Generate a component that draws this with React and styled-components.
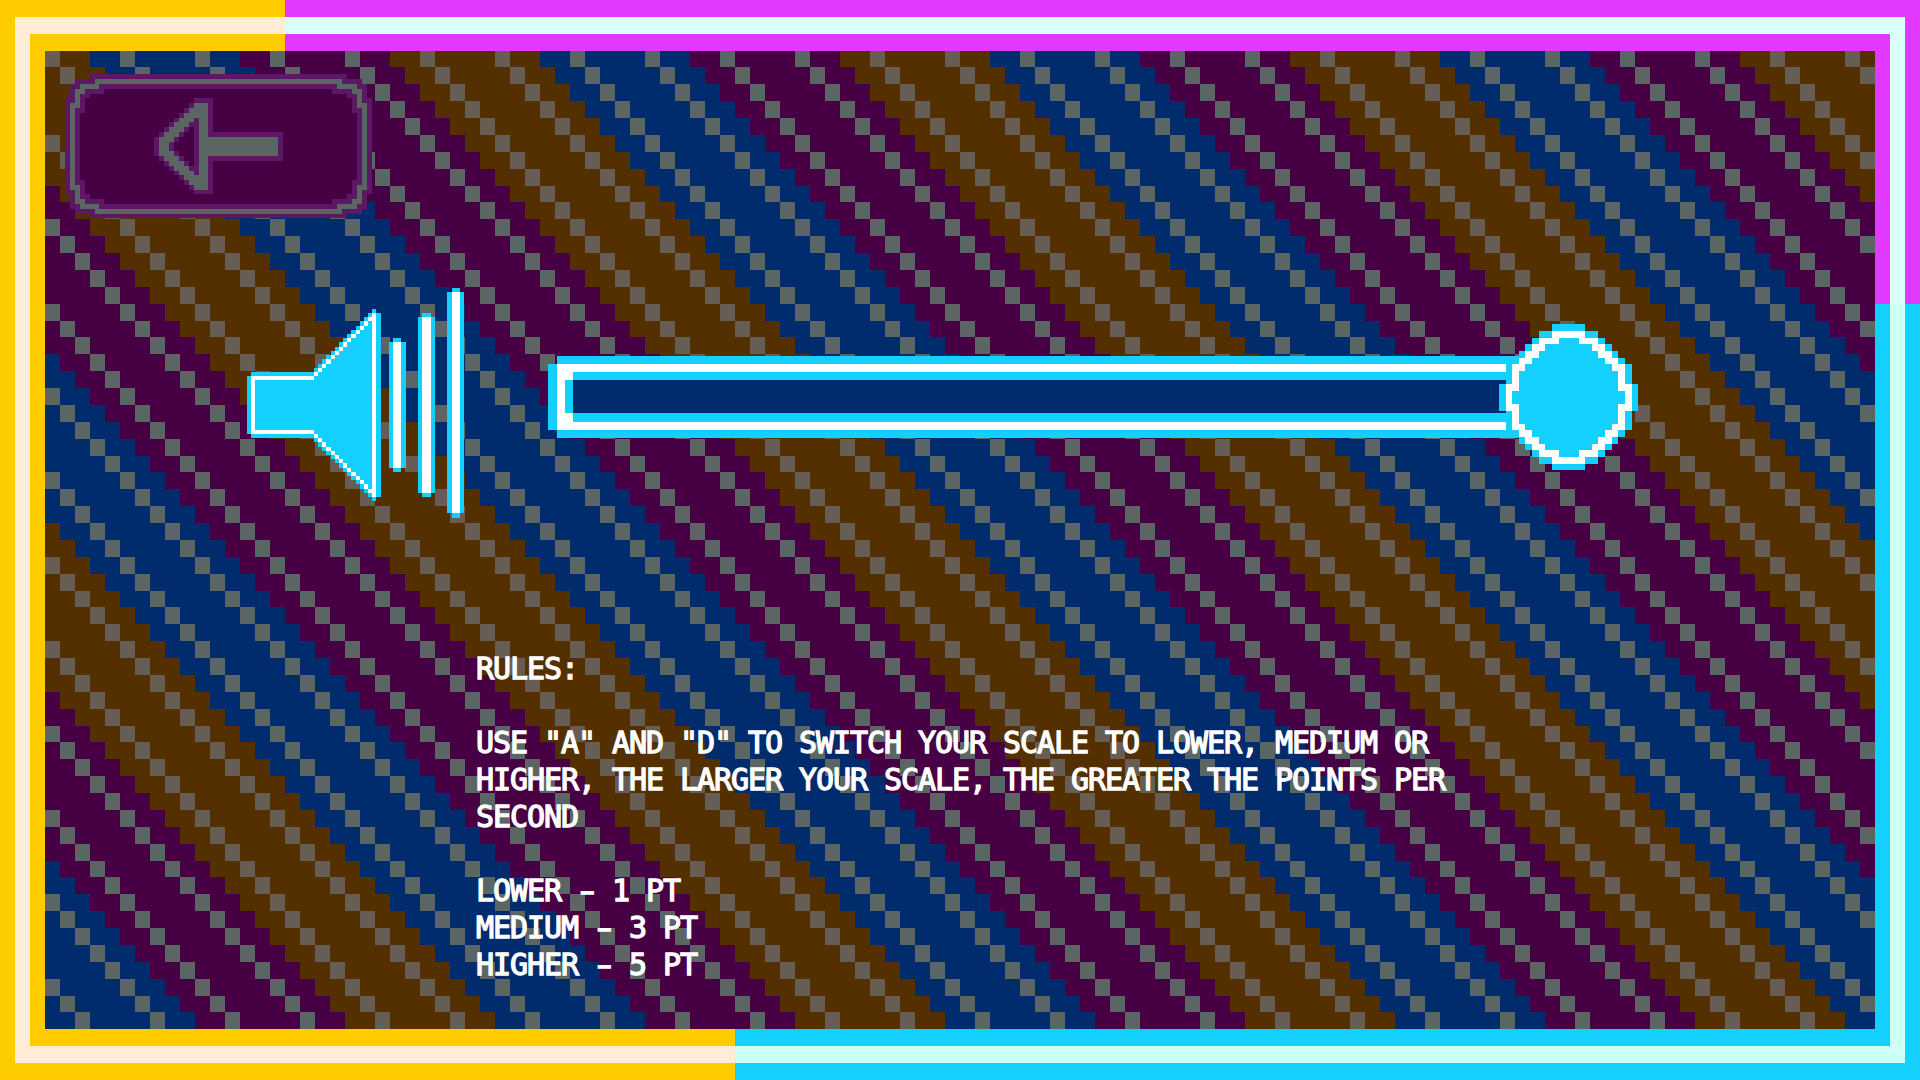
import React from 'react';
import styled, { createGlobalStyle } from 'styled-components';

const color = {
  yellow: '#ffcc00',
  magenta: '#e139ff',
  cyan: '#14d0ff',
  cream: '#ffecd6',
  ice: '#dbffff',
  mint: '#ccfff6',
  navy: '#002c6e',
  plum: '#480044',
  brown: '#543000',
  slate: '#5b6564',
  taupe: '#665e55',
  violet: '#5c1865',
};

const GlobalStyle = createGlobalStyle`
  * { box-sizing: border-box; }
  body { margin: 0; background: #000; overflow: hidden; }
`;

/* Each ring repeats the same three colour regions, shifted by its own inset. */
const Ring = styled.div`
  width: ${(p) => 1920 - p.$step * 30}px;
  height: ${(p) => 1080 - p.$step * 34}px;
  padding: 17px 15px;
  background-color: ${(p) => p.$left};
  background-image: linear-gradient(${(p) => p.$top}, ${(p) => p.$top}),
    linear-gradient(${(p) => p.$right}, ${(p) => p.$right});
  background-repeat: no-repeat;
  background-size: 1920px ${(p) => 304 - p.$step * 17}px, 1920px 1080px;
  background-position: ${(p) => 285 - p.$step * 15}px 0,
    ${(p) => 735 - p.$step * 15}px ${(p) => 304 - p.$step * 17}px;
`;

const Panel = styled.main`
  display: grid;
  width: 1830px;
  height: 978px;
  overflow: hidden;
  background: ${color.plum};
  & > * { grid-area: 1 / 1; }
`;

const Backdrop = styled.svg`
  display: block;
  width: 1830px;
  height: 978px;
`;

const Content = styled.div`
  position: relative;
  display: flex;
  flex-direction: column;
  align-items: flex-start;
  padding: 23px 0 0 20px;
`;

const BackButton = styled.button`
  display: block;
  width: 307px;
  height: 144px;
  padding: 0;
  border: 0;
  background: none;
  cursor: pointer;
`;

const PixelArt = styled.svg`
  display: block;
  width: 100%;
  height: 100%;
  shape-rendering: crispEdges;
`;

const VolumeRow = styled.section`
  display: flex;
  align-items: flex-start;
  margin: 70px 0 0 182px;
`;

const Speaker = styled.div`
  width: 217px;
  height: 230px;
`;

const Slider = styled.div`
  position: relative;
  width: 962px;
  height: 82px;
  margin: 68px 0 0 93px;
  padding: 8px 13px 8px 0;
  background: ${color.cyan};
`;

const Rail = styled.div`
  height: 66px;
  padding: 8px 0 8px 16px;
  background: #fff;
  box-shadow: -9px 0 0 ${color.cyan};
`;

const Groove = styled.div`
  height: 50px;
  padding: 8px 0 9px;
  background: ${color.cyan};
`;

const Hollow = styled.div`
  height: 33px;
  background: ${color.navy};
  box-shadow: -8px 0 0 ${color.cyan};
`;

const Knob = styled.div`
  position: absolute;
  left: 942px;
  top: -32px;
  width: 139px;
  height: 146px;
`;

const Rules = styled.div`
  margin: 132px 0 0 411px;
  color: #fff;
  font-family: 'DejaVu Sans Mono', 'Liberation Mono', monospace;
  font-size: 30px;
  line-height: 37px;
  letter-spacing: -1.06px;
  -webkit-text-stroke: 1.3px #fff;
  white-space: pre;
`;

const Line = styled.p`
  height: 37px;
  margin: 0;
`;

const Dash = styled.span`
  display: inline-block;
  transform: scaleX(1.5);
`;

const rowEdge = (r) => Math.ceil(r * 16.875 - 0.5);
const mod = (n, m) => ((n % m) + m) % m;

function buildStripes() {
  const paths = {};
  const add = (fill, x, y, w, h) => {
    paths[fill] = (paths[fill] || '') + `M${x} ${y}h${w}v${h}h${-w}z`;
  };
  for (let r = 3; r < 61; r += 1) {
    const y = rowEdge(r);
    const h = rowEdge(r + 1) - y;
    for (let c = 3; c < 125; c += 1) {
      const band = Math.floor(mod(c - r - 3, 30) / 10);
      const dotted = mod(c - r, 5) === 0;
      const base = [color.navy, color.plum, color.brown][band];
      const dot = band === 2 ? color.taupe : color.slate;
      add(dotted ? dot : base, c * 15 - 45, y - 51, 15, h);
    }
  }
  return Object.entries(paths);
}

const stripes = buildStripes();

function Stripes() {
  return (
    <Backdrop viewBox="0 0 1830 978" shapeRendering="crispEdges" aria-hidden="true">
      {stripes.map(([fill, d]) => (
        <path key={fill} fill={fill} d={d} />
      ))}
    </Backdrop>
  );
}

function BackArt() {
  return (
    <PixelArt viewBox="195 222 921 432" preserveAspectRatio="none">
      <path fill={color.violet} d="M270 222H1041V237H1086V252H1101V294H1116V582H1101V627H1086V642H1041V654H270V642H225V627H210V582H195V294H210V252H225V237H270Z" />
      <path fill={color.slate} d="M285 237H1026V252H1071V267H1086V309H1101V570H1086V612H1071V627H1026V642H285V627H240V612H225V570H210V309H225V267H240V252H285Z" />
      <path fill={color.violet} d="M297 252H1011V267H1056V282H1071V324H1086V555H1071V597H1056V612H1011V627H297V612H255V597H240V555H225V324H240V282H255V267H297Z" />
      <path fill={color.plum} d="M312 267H996V282H1041V294H1056V339H1071V540H1056V582H1041V597H996V612H312V597H270V582H255V540H240V339H255V294H270V282H312Z" />
      <path fill={color.violet} d="M582 294H639V396H849V483H639V582H582V570H567V555H552V540H537V525H522V513H507V498H492V483H477V468H462V411H477V396H492V381H507V366H522V354H537V339H552V324H567V309H582Z" />
      <path fill={color.slate} d="M582 309H624V411H834V468H624V570H582V555H567V540H552V525H537V513H522V498H507V483H492V468H477V411H492V396H507V381H522V366H537V354H552V339H567V324H582Z" />
      <path fill={color.violet} d="M582 354H597V525H582V513H567V498H552V483H537V468H522V453H507V426H522V411H537V396H552V381H567V366H582Z" />
      <path fill={color.plum} d="M567 381H582V498H567V483H552V468H537V453H522V426H537V411H552V396H567Z" />
    </PixelArt>
  );
}

const coneX = [252, 264, 276, 288, 303, 315, 327, 339, 351, 363, 378, 390, 402, 414, 426];
const coneTop = [318, 306, 294, 282, 267, 255, 243, 231, 216, 204, 192, 180, 168, 153, 141, 129, 117];
const coneBottom = [480, 492, 504, 516, 531, 543, 555, 567, 579, 594, 606, 618, 630, 642, 657, 669, 681, 693].slice(1);
const waves = [
  { x: 477, w: 51, ix: 489, iw: 24, top: 204, a: 216, b: 594, bottom: 606 },
  { x: 564, w: 51, ix: 576, iw: 27, top: 129, a: 141, b: 669, bottom: 681 },
  { x: 651, w: 51, ix: 666, iw: 24, top: 54, a: 66, b: 729, bottom: 744 },
];

function SpeakerArt() {
  const cone = coneX.slice(0, 14).map((x, i) => ({
    x,
    w: coneX[i + 1] - x,
    top: coneTop[i],
    edge: coneTop[i + 1],
    outer: coneTop[i + 2],
    low: coneBottom[i],
    lowEdge: coneBottom[i + 1],
    lowOuter: coneBottom[i + 2],
  }));
  return (
    <PixelArt viewBox="51 54 651 690" role="img" aria-label="Volume">
      <path fill={color.cyan} d="M63 306H252V504H63V492H51V318H63Z" />
      <path fill="#fff" d="M63 318H252V330H75V480H252V492H63Z" />
      {cone.map((s) => (
        <g key={s.x}>
          <rect x={s.x} y={s.outer} width={s.w} height={s.lowOuter - s.outer} fill={color.cyan} />
          <rect x={s.x} y={s.edge} width={s.w} height={s.top - s.edge} fill="#fff" />
          <rect x={s.x} y={s.low} width={s.w} height={s.lowEdge - s.low} fill="#fff" />
        </g>
      ))}
      <path fill={color.cyan} d="M426 117H438V129H453V681H438V693H426Z" />
      <path fill="#fff" d="M426 129H438V681H426Z" />
      {waves.map((b) => (
        <g key={b.x}>
          <rect x={b.x} y={b.a} width={b.w} height={b.b - b.a} fill={color.cyan} />
          <rect x={b.ix} y={b.top} width={b.iw} height={b.bottom - b.top} fill={color.cyan} />
          <rect x={b.ix} y={b.a} width={b.iw} height={b.b - b.a} fill="#fff" />
        </g>
      ))}
    </PixelArt>
  );
}

const knobBody = [
  [72, 93, 276, 375], [93, 114, 237, 414], [114, 132, 216, 435], [132, 153, 195, 456],
  [153, 174, 177, 474], [174, 192, 156, 495], [192, 252, 138, 516], [252, 333, 117, 534],
  [333, 390, 138, 516], [390, 411, 156, 495], [411, 432, 177, 474], [432, 450, 195, 456],
  [450, 471, 216, 435], [471, 492, 237, 414], [492, 510, 276, 375],
];
const knobRim = [
  [93, 114, 276, 375],
  [114, 132, 237, 297], [114, 132, 357, 414], [132, 153, 216, 255], [132, 153, 396, 435],
  [153, 174, 195, 237], [153, 174, 414, 456], [174, 192, 177, 216], [174, 192, 435, 474],
  [192, 213, 156, 195], [192, 213, 456, 495], [213, 252, 156, 177], [213, 252, 474, 495],
  [252, 273, 138, 177], [252, 273, 474, 516], [273, 312, 138, 156], [273, 312, 495, 516],
  [312, 333, 138, 177], [312, 333, 474, 516], [333, 372, 156, 177], [333, 372, 474, 495],
  [372, 390, 156, 195], [372, 390, 456, 495], [390, 411, 177, 216], [390, 411, 435, 474],
  [411, 432, 195, 237], [411, 432, 414, 456], [432, 450, 216, 255], [432, 450, 396, 435],
  [450, 471, 237, 297], [450, 471, 357, 414], [471, 492, 276, 375],
];
const toPath = (rows) => rows.map(([y0, y1, x0, x1]) => `M${x0} ${y0}H${x1}V${y1}H${x0}Z`).join('');

function KnobArt() {
  return (
    <PixelArt viewBox="117 72 417 438">
      <path fill={color.cyan} d={toPath(knobBody)} />
      <path fill="#fff" d={toPath(knobRim)} />
    </PixelArt>
  );
}

const rules = [
  'RULES:',
  '',
  'USE "A" AND "D" TO SWITCH YOUR SCALE TO LOWER, MEDIUM OR',
  'HIGHER, THE LARGER YOUR SCALE, THE GREATER THE POINTS PER',
  'SECOND',
  '',
];

const scores = [
  ['LOWER', '1 PT'],
  ['MEDIUM', '3 PT'],
  ['HIGHER', '5 PT'],
];

export default function App() {
  return (
    <>
      <GlobalStyle />
      <Ring $step={0} $left={color.yellow} $top={color.magenta} $right={color.cyan}>
        <Ring $step={1} $left={color.cream} $top={color.ice} $right={color.mint}>
          <Ring $step={2} $left={color.yellow} $top={color.magenta} $right={color.cyan}>
            <Panel>
              <Stripes />
              <Content>
                <BackButton type="button" aria-label="Back">
                  <BackArt />
                </BackButton>
                <VolumeRow>
                  <Speaker>
                    <SpeakerArt />
                  </Speaker>
                  <Slider role="slider" aria-label="Volume" aria-valuenow={100}>
                    <Rail>
                      <Groove>
                        <Hollow />
                      </Groove>
                    </Rail>
                    <Knob>
                      <KnobArt />
                    </Knob>
                  </Slider>
                </VolumeRow>
                <Rules>
                  {rules.map((text, i) => (
                    <Line key={i}>{text}</Line>
                  ))}
                  {scores.map(([name, points]) => (
                    <Line key={name}>
                      {name} <Dash>-</Dash> {points}
                    </Line>
                  ))}
                </Rules>
              </Content>
            </Panel>
          </Ring>
        </Ring>
      </Ring>
    </>
  );
}
